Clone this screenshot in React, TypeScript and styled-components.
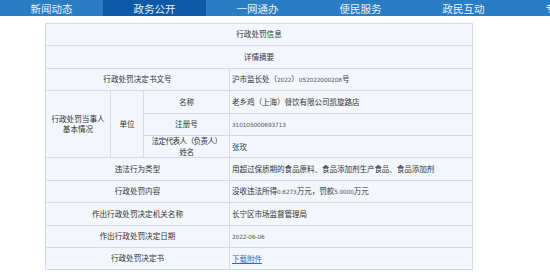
import React from "react";
import styled, { createGlobalStyle } from "styled-components";

const GlobalStyle = createGlobalStyle`
  html, body {
    margin: 0;
    padding: 0;
    background: #ffffff;
    font-family: "Noto Sans CJK SC", "Liberation Sans", sans-serif;
  }
`;

const navItems = ["新闻动态", "政务公开", "一网通办", "便民服务", "政民互动", "专题专栏"];

export default function App() {
  return (
    <>
      <GlobalStyle />
      <Page>
        <Nav>
          {navItems.map((item, i) => (
            <NavItem key={item} $active={i === 1}>
              {item}
            </NavItem>
          ))}
        </Nav>
        <Table>
          <colgroup>
            <col style={{ width: 65 }} />
            <col style={{ width: 33 }} />
            <col style={{ width: 86 }} />
            <col style={{ width: 243 }} />
          </colgroup>
          <tbody>
            <Row>
              <Label colSpan={4}>行政处罚信息</Label>
            </Row>
            <Row>
              <Label colSpan={4}>详情摘要</Label>
            </Row>
            <Row>
              <Label colSpan={3}>行政处罚决定书文号</Label>
              <Value>
                沪市监长处（<Num>2022</Num>）<Num>052022000208</Num>号
              </Value>
            </Row>
            <Row>
              <Label rowSpan={3}>
                行政处罚当事人
                <br />
                基本情况
              </Label>
              <Label rowSpan={3}>单位</Label>
              <Label>名称</Label>
              <Value>老乡鸡（上海）餐饮有限公司凯旋路店</Value>
            </Row>
            <Row>
              <Label>注册号</Label>
              <Value>
                <Num>310105000693713</Num>
              </Value>
            </Row>
            <Row>
              <Label $tight>
                法定代表人（负责人）
                <br />
                姓名
              </Label>
              <Value>张玫</Value>
            </Row>
            <Row>
              <Label colSpan={3}>违法行为类型</Label>
              <Value>用超过保质期的食品原料、食品添加剂生产食品、食品添加剂</Value>
            </Row>
            <Row>
              <Label colSpan={3}>行政处罚内容</Label>
              <Value>
                没收违法所得<Num>0.6273</Num>万元，罚款<Num>5.0000</Num>万元
              </Value>
            </Row>
            <Row>
              <Label colSpan={3}>作出行政处罚决定机关名称</Label>
              <Value>长宁区市场监督管理局</Value>
            </Row>
            <Row>
              <Label colSpan={3}>作出行政处罚决定日期</Label>
              <Value>
                <Num>2022-06-06</Num>
              </Value>
            </Row>
            <Row>
              <Label colSpan={3}>行政处罚决定书</Label>
              <Value>
                <Link href="#">下载附件</Link>
              </Value>
            </Row>
          </tbody>
        </Table>
      </Page>
    </>
  );
}

const Page = styled.div`
  width: 550px;
  height: 275px;
  overflow: hidden;
`;

const Nav = styled.div`
  display: flex;
  height: 16px;
  background: #2a7dc3;
  overflow: hidden;
`;

const NavItem = styled.div<{ $active?: boolean }>`
  flex: 0 0 103px;
  display: flex;
  align-items: center;
  justify-content: center;
  color: #e8f1fa;
  font-size: 10.5px;
  white-space: nowrap;
  background: ${({ $active }) => ($active ? "#0f5aa6" : "transparent")};
`;

const Table = styled.table`
  margin: 7px 0 0 45px;
  width: 427px;
  table-layout: fixed;
  border-collapse: collapse;
  border: 1px solid #d3dce6;
  background: #f3f7fc;
  color: #333333;
  font-size: 7.6px;
`;

const Row = styled.tr`
  height: 22.4px;
`;

const Label = styled.td<{ $tight?: boolean }>`
  border: 1px solid #d3dce6;
  padding: 0;
  text-align: center;
  line-height: 10.5px;
  white-space: nowrap;
  letter-spacing: ${({ $tight }) => ($tight ? "-0.6px" : "0")};
`;

const Value = styled.td`
  border: 1px solid #d3dce6;
  padding: 0 0 0 2px;
  text-align: left;
  line-height: 10px;
  white-space: nowrap;
  overflow: hidden;
  letter-spacing: -0.1px;
`;

const Num = styled.span`
  font-family: "DejaVu Sans", sans-serif;
  font-size: 5.8px;
  color: #555555;
`;

const Link = styled.a`
  color: #2a6fb8;
  text-decoration: underline;
`;
